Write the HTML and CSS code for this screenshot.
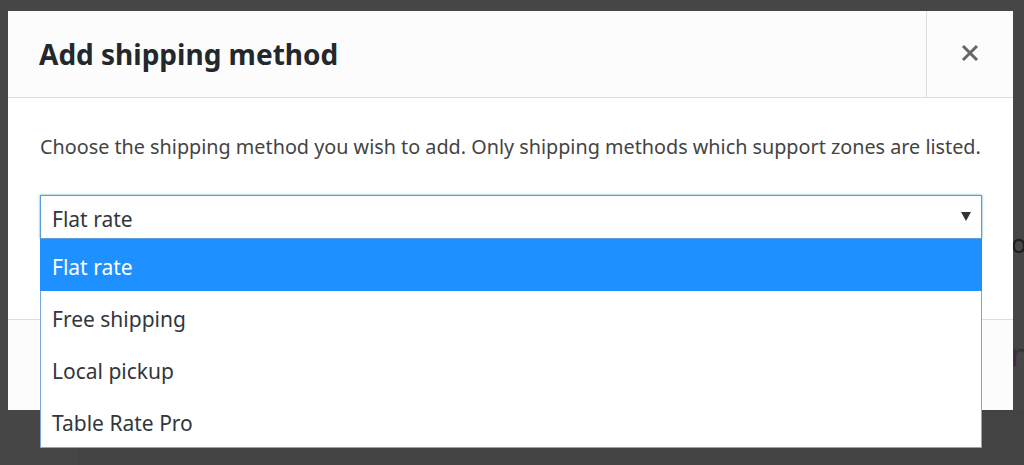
FILE: index.html
```html
<!DOCTYPE html>
<html lang="en">
<head>
<meta charset="utf-8">
<title>Add shipping method</title>
<link rel="stylesheet" href="styles.css">
</head>
<body>
<div class="behind">
  <div class="behind-panel"></div>
  <span class="behind-text t1">ol</span>
  <span class="behind-text t2">n</span>
</div>
<div class="backdrop">
  <div class="modal">
    <header class="modal-header">
      <h1 class="modal-title">Add shipping method</h1>
      <button class="modal-close" aria-label="Close">
        <svg width="18" height="18" viewBox="0 0 18 18"><path d="M2 2 L16 16 M16 2 L2 16" stroke="#666" stroke-width="3" fill="none"/></svg>
      </button>
    </header>
    <div class="modal-body">
      <p class="modal-desc">Choose the shipping method you wish to add. Only shipping methods which support zones are listed.</p>
      <div class="select-wrap">
        <div class="select">
          <span class="select-value">Flat rate</span>
          <svg class="select-arrow" width="10" height="9" viewBox="0 0 10 9"><path d="M0 0 H10 L5 9 Z" fill="#333"/></svg>
        </div>
        <ul class="options">
          <li class="option selected">Flat rate</li>
          <li class="option">Free shipping</li>
          <li class="option">Local pickup</li>
          <li class="option">Table Rate Pro</li>
        </ul>
      </div>
    </div>
    <footer class="modal-footer"></footer>
  </div>
</div>
</body>
</html>
```

FILE: styles.css
```css
* { box-sizing: border-box; }
html, body { margin: 0; padding: 0; }
body {
  width: 1024px;
  height: 465px;
  overflow: hidden;
  background: #464646;
  font-family: "Noto Sans", "Open Sans", sans-serif;
  position: relative;
}
.behind {
  position: absolute;
  inset: 0;
}
.behind-panel {
  position: absolute;
  left: 77px;
  top: 410px;
  right: 0;
  bottom: 0;
  background: #434343;
}
.behind-text {
  position: absolute;
  left: 1011px;
  font-size: 26px;
  line-height: 1;
}
.behind-text.t1 { top: 230px; color: #1c1c1c; }
.behind-text.t2 { top: 340px; color: #3f2c3f; font-size: 30px; }
.backdrop {
  position: relative;
  padding: 11px 11px 0 8px;
}
.modal {
  width: 1005px;
  height: 399px;
  background: #fff;
  display: flex;
  flex-direction: column;
}
.modal-header {
  height: 87px;
  flex: none;
  display: flex;
  align-items: stretch;
  background: #fcfcfc;
  border-bottom: 1px solid #dddddd;
}
.modal-title {
  flex: 1;
  margin: 0;
  padding-left: 31px;
  display: flex;
  align-items: center;
  font-size: 28px;
  font-weight: 700;
  color: #23282d;
  padding-bottom: 1px;
}
.modal-close {
  width: 87px;
  border: 0;
  border-left: 1px solid #dddddd;
  background: transparent;
  padding: 0;
  display: flex;
  align-items: center;
  justify-content: center;
  padding-bottom: 2px;
}
.modal-body {
  height: 221px;
  flex: none;
  padding: 0 31px 0 32px;
  position: relative;
}
.modal-desc {
  margin: 0;
  padding-top: 36px;
  font-size: 19.8px;
  line-height: 26px;
  color: #444;
  white-space: nowrap;
}
.select-wrap {
  position: relative;
  margin-top: 35px;
  width: 942px;
}
.select {
  height: 44px;
  border: 1px solid #5b9dd9;
  box-shadow: 0 0 2px rgba(30, 140, 190, 0.8);
  background: #fff;
  display: flex;
  align-items: center;
  justify-content: space-between;
  padding: 3px 10px 0 11px;
}
.select-value {
  font-size: 21px;
  color: #32373c;
}
.select-arrow { flex: none; margin-top: -4px; }
.options {
  position: absolute;
  left: 0;
  right: 0;
  top: 44px;
  margin: 0;
  padding: 0;
  list-style: none;
  background: #fff;
  border: 1px solid #7fa6d8;
  border-top: 0;
  z-index: 2;
}
.option {
  height: 52px;
  display: flex;
  align-items: center;
  padding: 4px 0 0 11px;
  font-size: 21px;
  color: #32373c;
}
.option.selected {
  background: #1e90ff;
  color: #fff;
  margin: 0 -1px;
  padding-left: 12px;
}
.modal-footer {
  flex: 1;
  background: #fcfcfc;
  border-top: 1px solid #dddddd;
}
```
